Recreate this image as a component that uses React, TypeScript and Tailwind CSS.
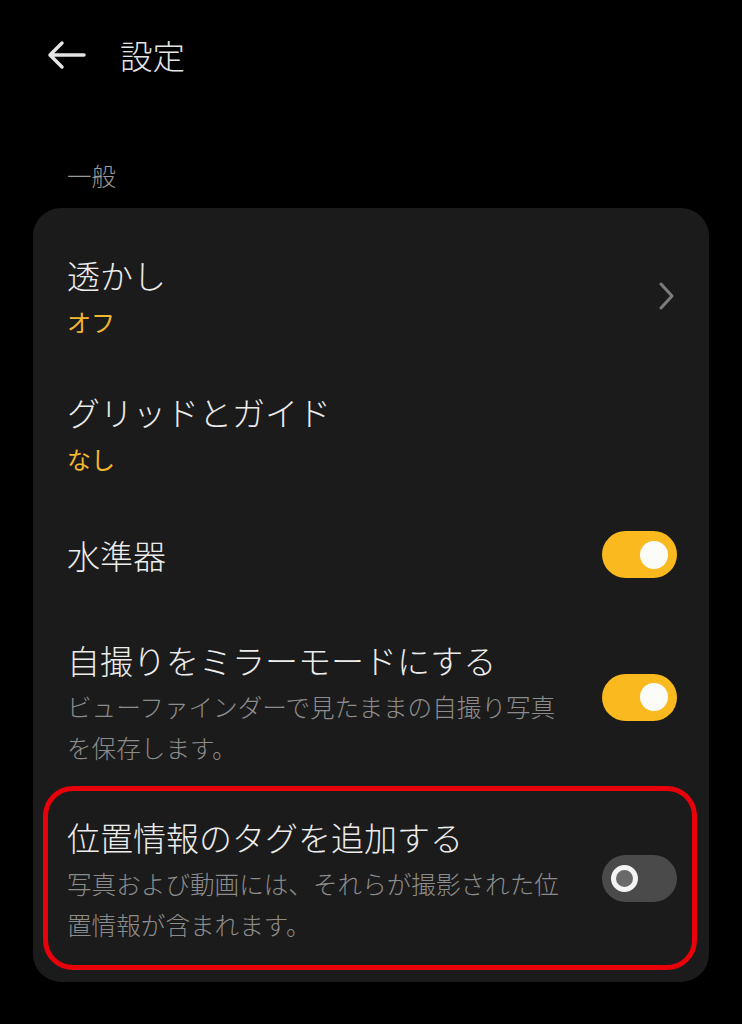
import React from "react";

const font = { fontFamily: '"Noto Sans CJK JP", "Noto Sans", sans-serif' };

function Toggle({ on }: { on: boolean }) {
  if (on) {
    return (
      <div className="flex h-[47px] w-[75px] shrink-0 items-center justify-end rounded-full bg-[#f9b91f] pr-[9px]">
        <div className="h-[28px] w-[28px] rounded-full bg-[#fbfbf8]" />
      </div>
    );
  }
  return (
    <div className="flex h-[47px] w-[75px] shrink-0 items-center rounded-full bg-[#4a4a4a] pl-[9px]">
      <div className="h-[27px] w-[27px] rounded-full border-[5px] border-[#f4f4f4] bg-[#6a6a6a]" />
    </div>
  );
}

function Chevron() {
  return (
    <svg width="20" height="28" viewBox="0 0 20 28" className="-mt-[4px] shrink-0">
      <path d="M4 2 L15 14 L4 26" fill="none" stroke="#7c7c7c" strokeWidth="3" strokeLinecap="round" strokeLinejoin="round" />
    </svg>
  );
}

export default function App() {
  return (
    <div className="min-h-[1024px] w-full bg-black font-light" style={font}>
      {/* Header */}
      <div className="flex h-[110px] items-center pl-[46px]">
        <svg width="40" height="32" viewBox="0 0 40 32">
          <path d="M38 16 H4 M16 4 L4 16 L16 28" fill="none" stroke="#e4e4e4" strokeWidth="3.5" strokeLinecap="round" strokeLinejoin="round" />
        </svg>
        <span className="ml-[34px] text-[32.5px] leading-[44px] text-[#e6e6e6]">設定</span>
      </div>

      {/* Section label */}
      <div className="pl-[67px] pt-[49px] text-[24.5px] leading-[34px] text-[#9b9b9b]">一般</div>

      {/* Card */}
      <div className="mx-[33px] mt-[15px] rounded-[28px] bg-[#1b1b1b] pb-[12px] pt-[21px]">
        {/* Row 1 */}
        <div className="flex items-center justify-between py-6 pl-[34px] pr-[32px]">
          <div>
            <div className="text-[33px] leading-[44px] text-[#ececec]">透かし</div>
            <div className="mt-1 text-[24px] font-normal leading-[41px] text-[#f3b630]">オフ</div>
          </div>
          <Chevron />
        </div>

        {/* Row 2 */}
        <div className="py-6 pl-[34px] pr-[32px]">
          <div className="text-[33px] leading-[44px] text-[#ececec]">グリッドとガイド</div>
          <div className="mt-1 text-[24px] font-normal leading-[41px] text-[#f3b630]">なし</div>
        </div>

        {/* Row 3 */}
        <div className="flex items-center justify-between pb-[36px] pl-[34px] pr-[32px] pt-[28px]">
          <div className="text-[33px] leading-[44px] text-[#ececec]">水準器</div>
          <Toggle on />
        </div>

        {/* Row 4 */}
        <div className="flex items-center justify-between pb-[18px] pl-[34px] pr-[32px] pt-6">
          <div>
            <div className="text-[33px] leading-[44px] text-[#ececec]">自撮りをミラーモードにする</div>
            <div className="mt-1 w-[500px] text-[24.6px] leading-[41px] text-[#8c8c8c]">
              ビューファインダーで見たままの自撮り写真を保存します。
            </div>
          </div>
          <div className="-mt-[12px]">
            <Toggle on />
          </div>
        </div>

        {/* Row 5 (highlighted) */}
        <div className="ml-[10px] mr-[12px] flex items-center justify-between rounded-[30px] border-[5px] border-[#e8000b] pb-[20px] pl-[19px] pr-[15px] pt-6">
          <div>
            <div className="text-[33px] leading-[44px] text-[#ececec]">位置情報のタグを追加する</div>
            <div className="mt-1 w-[500px] text-[24.6px] leading-[41px] text-[#8c8c8c]">
              写真および動画には、それらが撮影された位置情報が含まれます。
            </div>
          </div>
          <div className="-mt-[4px]">
            <Toggle on={false} />
          </div>
        </div>
      </div>
    </div>
  );
}
